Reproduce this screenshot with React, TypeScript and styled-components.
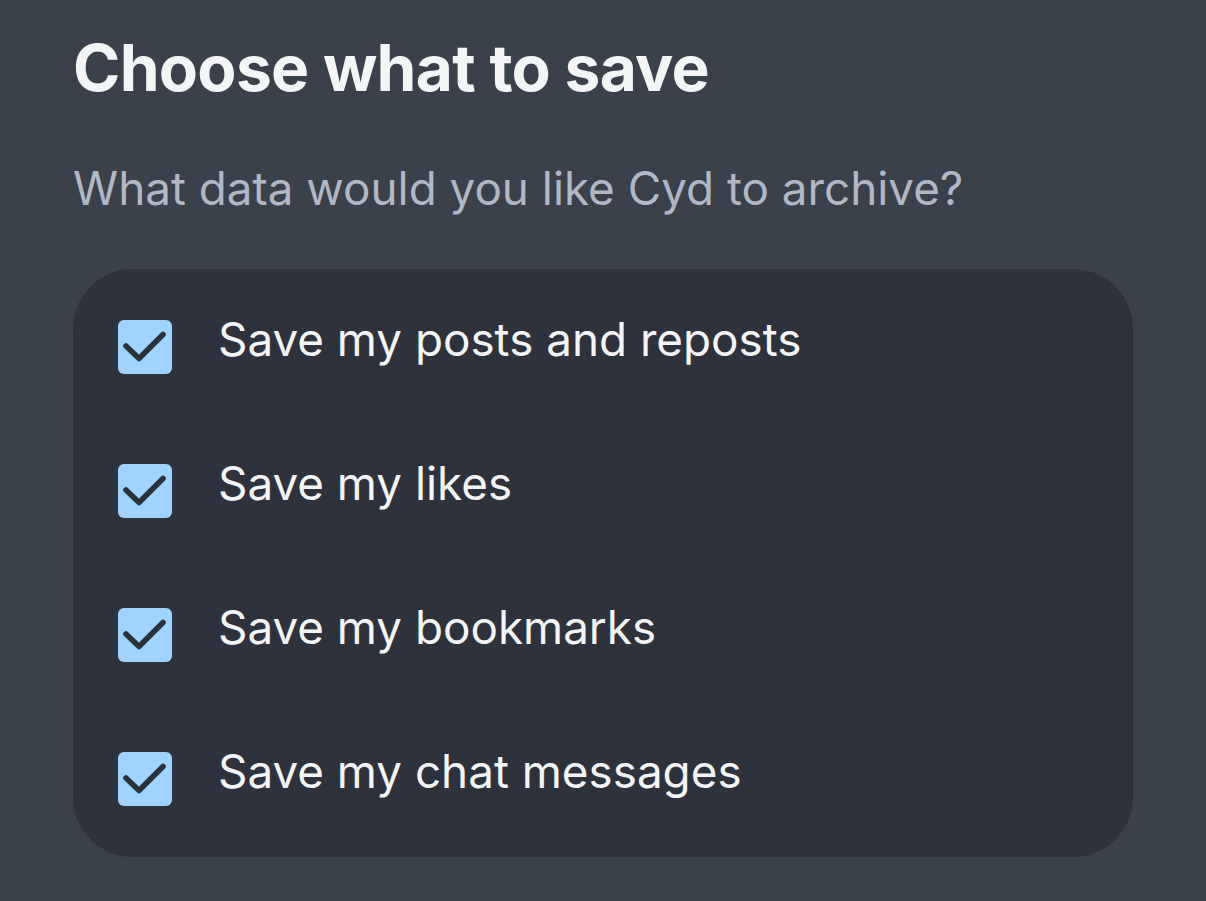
import { useState } from "react";
import styled, { createGlobalStyle } from "styled-components";

const GlobalStyle = createGlobalStyle`
  html, body {
    margin: 0;
    padding: 0;
    background: #3b414b;
  }
  body {
    font-family: Inter, "Noto Sans", sans-serif;
    -webkit-font-smoothing: antialiased;
  }
`;

const Page = styled.div`
  min-height: 901px;
  box-sizing: border-box;
  padding: 32px 73px 0 73px;
  background: #3b414b;
`;

const Title = styled.h1`
  margin: 0;
  font-size: 64px;
  line-height: 72px;
  font-weight: 700;
  color: #f4f5f7;
  letter-spacing: -0.7px;
  white-space: nowrap;
`;

const Subtitle = styled.p`
  margin: 57px 0 0 0;
  font-size: 45.8px;
  line-height: 56px;
  font-weight: 400;
  color: #b0b7c5;
  white-space: nowrap;
`;

const Card = styled.div`
  margin-top: 52px;
  width: 1060px;
  box-sizing: border-box;
  background: #2d323c;
  border-radius: 60px;
  padding: 51px 45px;
  display: flex;
  flex-direction: column;
  gap: 90px;
`;

const Row = styled.label`
  display: flex;
  align-items: center;
  gap: 46px;
  cursor: pointer;
`;

const Box = styled.span<{ $checked: boolean }>`
  flex: none;
  width: 54px;
  height: 54px;
  border-radius: 6px;
  background: ${(p) => (p.$checked ? "#9ed4ff" : "transparent")};
  border: ${(p) => (p.$checked ? "none" : "3px solid #9ed4ff")};
  box-sizing: border-box;
  display: flex;
  align-items: center;
  justify-content: center;
`;

const Label = styled.span`
  font-size: 45.8px;
  line-height: 54px;
  color: #f4f5f7;
  position: relative;
  top: -7px;
  white-space: nowrap;
`;

const items = [
  "Save my posts and reposts",
  "Save my likes",
  "Save my bookmarks",
  "Save my chat messages",
];

function Check() {
  return (
    <svg width="54" height="54" viewBox="0 0 54 54">
      <path
        d="M8 26 L21 38.5 L45 14.5"
        fill="none"
        stroke="#2b313b"
        strokeWidth="5.5"
        strokeLinecap="round"
        strokeLinejoin="round"
      />
    </svg>
  );
}

export default function App() {
  const [checked, setChecked] = useState(items.map(() => true));

  return (
    <>
      <GlobalStyle />
      <Page>
        <Title>Choose what to save</Title>
        <Subtitle>What data would you like Cyd to archive?</Subtitle>
        <Card>
          {items.map((item, i) => (
            <Row
              key={item}
              onClick={() =>
                setChecked((c) => c.map((v, j) => (j === i ? !v : v)))
              }
            >
              <Box $checked={checked[i]}>{checked[i] && <Check />}</Box>
              <Label>{item}</Label>
            </Row>
          ))}
        </Card>
      </Page>
    </>
  );
}
